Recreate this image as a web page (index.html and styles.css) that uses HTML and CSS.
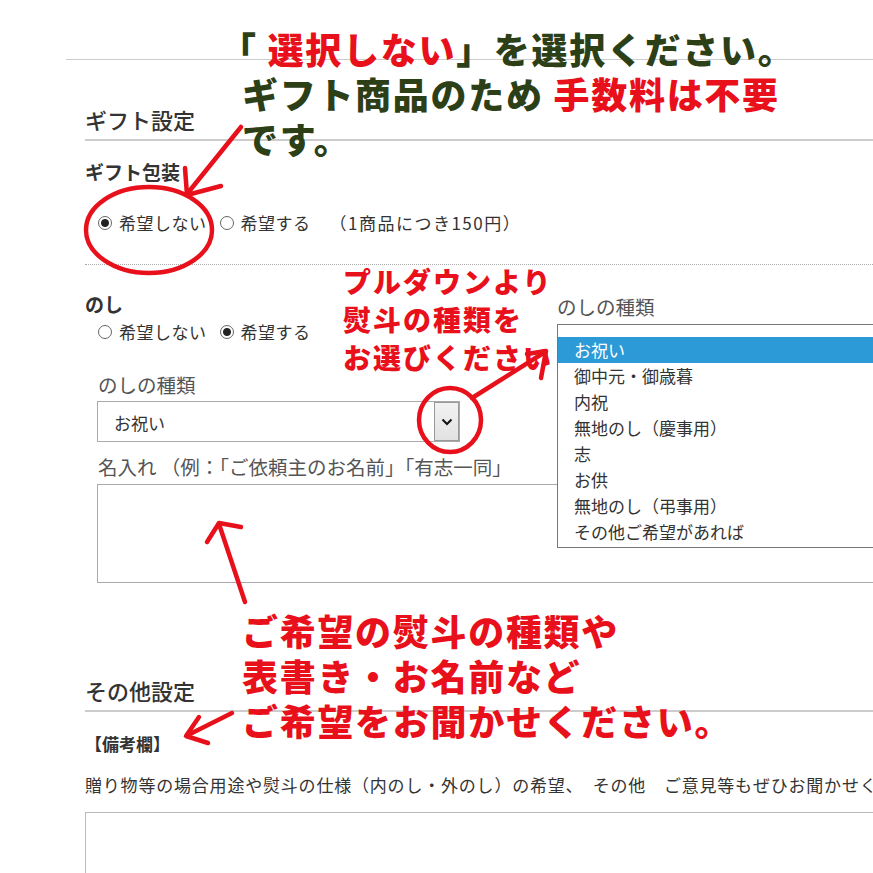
FILE: index.html
```html
<!DOCTYPE html>
<html lang="ja">
<head>
    <meta charset="UTF-8">
    <meta name="viewport" content="width=device-width, initial-scale=1.0">
    <title>ギフト設定</title>
    <link rel="stylesheet" href="styles.css">
</head>
<body>
<div class="page">
    <form class="order-form">
        <h2 class="section-title">ギフト設定</h2>
        <div class="field field-wrap">
            <div class="field-label">ギフト包装</div>
            <div class="radio-row">
                <label class="radio"><input type="radio" name="wrap" checked>希望しない</label>
                <label class="radio"><input type="radio" name="wrap">希望する</label>
                <span class="price-note">（1商品につき150円）</span>
            </div>
        </div>

        <div class="field field-noshi">
            <div class="field-label">のし</div>
            <div class="radio-row">
                <label class="radio"><input type="radio" name="noshi">希望しない</label>
                <label class="radio"><input type="radio" name="noshi" checked>希望する</label>
            </div>
            <div class="sub-label">のしの種類</div>
            <div class="select-box">
                <span class="select-value">お祝い</span>
                <span class="select-btn">
                    <svg width="12" height="8" viewBox="0 0 12 8"><path d="M1.5 1.5 L6 6 L10.5 1.5" fill="none" stroke="#111" stroke-width="2"/></svg>
                </span>
            </div>
            <div class="sub-label name-label">名入れ （例：「ご依頼主のお名前」「有志一同」</div>
            <textarea class="name-box"></textarea>
        </div>

        <h2 class="section-title other-title">その他設定</h2>
        <div class="memo-label">【備考欄】</div>
        <p class="memo-text">贈り物等の場合用途や熨斗の仕様（内のし・外のし）の希望、　その他　ご意見等もぜひお聞かせください。</p>
        <textarea class="memo-box"></textarea>
    </form>

    <!-- opened pulldown shown beside the form -->
    <div class="popup-label">のしの種類</div>
    <ul class="popup-list">
        <li class="active">お祝い</li>
        <li>御中元・御歳暮</li>
        <li>内祝</li>
        <li>無地のし（慶事用）</li>
        <li>志</li>
        <li>お供</li>
        <li>無地のし（弔事用）</li>
        <li>その他ご希望があれば</li>
    </ul>

    <!-- red marks -->
    <svg class="marks" width="873" height="873" viewBox="0 0 873 873">
        <g fill="none" stroke="#e8101a" stroke-width="4.5" stroke-linecap="round" stroke-linejoin="round">
            <ellipse cx="149" cy="230" rx="63" ry="43"/>
            <path d="M241 127 L187 194"/>
            <path d="M185 168 L187 195 L221 186"/>
            <ellipse cx="450" cy="420" rx="31" ry="32"/>
            <path d="M472 398 L545 352"/>
            <path d="M527 354 L546 351 L541 378"/>
            <path d="M245 602 L219 524"/>
            <path d="M207 542 L219 523 L241 527"/>
            <path d="M232 713 L188 735"/>
            <path d="M199 717 L186 736 L208 743"/>
        </g>
    </svg>

    <div class="callout callout-top">
        <div class="first-line">「 <span class="red">選択しない</span>」を選択ください。</div>
        <div>ギフト商品のため <span class="red">手数料は不要</span></div>
        <div>です。</div>
    </div>

    <div class="callout-small">
        <div>プルダウンより</div>
        <div>熨斗の種類を</div>
        <div>お選びください</div>
    </div>

    <div class="callout callout-bottom">
        <div>ご希望の熨斗の種類や</div>
        <div>表書き・お名前など</div>
        <div>ご希望をお聞かせください。</div>
    </div>
</div>
</body>
</html>
```

FILE: styles.css
```css
/* General */
body {
    margin: 0;
    background-color: #fff;
    color: #333;
    font-family: "Noto Sans CJK JP", "Noto Sans", sans-serif;
    overflow: hidden;
}

.page {
    position: relative;
    width: 873px;
    height: 873px;
    overflow: hidden;
}

/* Form */
.order-form {
    margin: 59px -60px 0 66px;
    padding-left: 19px;
    border-top: 1px solid #ccc;
}

.section-title {
    margin: 43px 0 0;
    padding-bottom: 3px;
    font-size: 22px;
    font-weight: 500;
    line-height: 33px;
    color: #333;
    border-bottom: 2px solid #ccc;
}

.other-title {
    margin-top: 91px;
}

.field-label {
    font-size: 19px;
    font-weight: bold;
    line-height: 28px;
    color: #333;
}

.field-wrap .field-label {
    margin-top: 17px;
}

.radio-row {
    display: flex;
    align-items: center;
    gap: 13px;
    padding-left: 13px;
    margin-top: 23px;
    font-size: 17px;
    line-height: 28px;
    letter-spacing: 0.5px;
    color: #333;
}

.radio {
    display: flex;
    align-items: center;
}

.radio input {
    appearance: none;
    -webkit-appearance: none;
    width: 14px;
    height: 14px;
    margin: 0 7px 0 0;
    border: 1px solid #666;
    border-radius: 50%;
    background-color: #fff;
}

.radio input:checked {
    background: radial-gradient(circle, #222 0 3.5px, #fff 4.5px);
}

.price-note {
    margin-left: 6px;
    letter-spacing: 1.5px;
}

.field-noshi {
    margin-top: 27px;
    padding-top: 25px;
    border-top: 1px dotted #aaa;
}

.field-noshi .radio-row {
    margin-top: 0;
}

.sub-label {
    margin-top: 25px;
    padding-left: 13px;
    font-size: 19.5px;
    line-height: 28px;
    color: #555;
}

.select-box {
    display: flex;
    align-items: stretch;
    justify-content: space-between;
    width: 363px;
    height: 41px;
    margin: 2px 0 0 12px;
    box-sizing: border-box;
    border: 1px solid #aaa;
    background-color: #fff;
}

.select-value {
    padding-left: 16px;
    font-size: 17px;
    line-height: 41px;
    color: #333;
}

.select-btn {
    display: flex;
    align-items: center;
    justify-content: center;
    width: 23px;
    border: 1px solid #999;
    background: linear-gradient(#f2f2f2, #e2e2e2);
}

.name-label {
    margin-top: 11px;
}

.name-box {
    display: block;
    width: calc(100% - 12px);
    height: 99px;
    margin: 3px 0 0 12px;
    box-sizing: border-box;
    border: 1px solid #aaa;
    resize: none;
}

.memo-label {
    margin-top: 19px;
    font-size: 17px;
    font-weight: bold;
    line-height: 26px;
    color: #333;
}

.memo-text {
    margin: 15px 0 0;
    font-size: 17px;
    line-height: 26px;
    letter-spacing: 0.8px;
    white-space: nowrap;
    color: #333;
}

.memo-box {
    display: block;
    width: 100%;
    height: 100px;
    margin-top: 14px;
    box-sizing: border-box;
    border: 1px solid #bbb;
    resize: none;
}

/* Opened pulldown */
.popup-label {
    position: absolute;
    left: 557px;
    top: 293px;
    font-size: 19.5px;
    line-height: 28px;
    color: #555;
}

.popup-list {
    position: absolute;
    left: 557px;
    top: 324px;
    width: 340px;
    margin: 0;
    padding: 12px 0 2px;
    list-style: none;
    border: 1px solid #777;
    background-color: #fff;
}

.popup-list li {
    height: 26px;
    padding-left: 16px;
    font-size: 17px;
    line-height: 26px;
    color: #333;
}

.popup-list li.active {
    background-color: #2c9ad6;
    color: #fff;
}

/* Annotations */
.marks {
    position: absolute;
    left: 0;
    top: 0;
    pointer-events: none;
}

.callout {
    position: absolute;
    left: 242px;
    font-size: 36px;
    font-weight: 900;
    line-height: 45px;
    letter-spacing: 1.7px;
    white-space: nowrap;
}

.callout-top {
    top: 26px;
    color: #2d3f17;
}

.callout-top .first-line {
    margin-left: -22px;
}

.callout-bottom {
    top: 608px;
    color: #e8101a;
}

.red {
    color: #e8101a;
}

.callout-small {
    position: absolute;
    left: 343px;
    top: 262px;
    font-size: 28px;
    font-weight: 900;
    line-height: 38px;
    letter-spacing: 2px;
    color: #e8101a;
    white-space: nowrap;
}
```
